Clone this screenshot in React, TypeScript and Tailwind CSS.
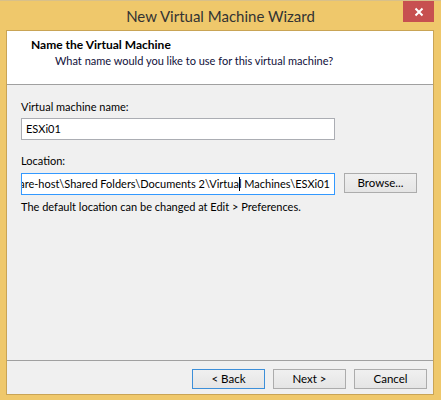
const font = { fontFamily: 'Lato, "Liberation Sans", sans-serif' };

function WinButton({ label, focused }: { label: string; focused?: boolean }) {
  return (
    <button
      className={
        "flex h-[20px] w-[73px] items-center justify-center border bg-gradient-to-b from-[#f0f0f0] to-[#e5e5e5] text-[11.5px] leading-none text-black " +
        (focused ? "border-[#3c8fd9]" : "border-[#acacac]")
      }
    >
      {label}
    </button>
  );
}

export default function App() {
  return (
    <div
      className="flex h-[400px] w-[441px] flex-col border-t border-[#d8c08a] bg-[#efc86b]"
      style={font}
    >
      {/* title bar */}
      <div className="grid h-[29px] grid-cols-[1fr_auto_1fr]">
        <div />
        <div className="pt-[5px] text-[15px] leading-[20px] text-[#333333]">
          New Virtual Machine Wizard
        </div>
        <div className="flex justify-end pr-[7px]">
          <div className="flex h-[21px] w-[31px] items-center justify-center bg-[#c75050]">
            <svg width="10" height="10" viewBox="0 0 10 10" aria-hidden="true">
              <path d="M1.5 1.5L8.5 8.5M8.5 1.5L1.5 8.5" stroke="#fff" strokeWidth="2" />
            </svg>
          </div>
        </div>
      </div>

      {/* dialog body */}
      <div className="mb-[5px] ml-[6px] mr-[7px] flex flex-1 flex-col border border-[#c9a455] bg-[#f0f0f0] text-[11px] leading-[16px]">
        <div className="h-[54px] border-b border-[#a0a0a0] bg-white pl-[24px] pt-[6px] text-[#10103a]">
          <div className="text-[12px] font-bold text-black">Name the Virtual Machine</div>
          <div className="pl-[24px]">What name would you like to use for this virtual machine?</div>
        </div>

        <div className="flex flex-1 flex-col px-[14px] pt-[14px] text-black">
          <div>Virtual machine name:</div>
          <div className="mt-[3px] flex h-[22px] w-[314px] items-center border border-[#abadb3] bg-white px-[4px]">
            ESXi01
          </div>

          <div className="mt-[13px]">Location:</div>
          <div className="mt-[4px] flex items-start gap-[9px]">
            <div className="flex h-[22px] w-[314px] items-center justify-end overflow-hidden whitespace-nowrap border border-[#3399ff] bg-white pr-[4px]">
              <span>
                \\vmware-host\Shared Folders\Documents 2\Virtua
                <span className="relative inline-block w-0">
                  <span className="absolute left-0 top-[-11px] h-[14px] w-px bg-black" />
                </span>
                l Machines\ESXi01
              </span>
            </div>
            <WinButton label="Browse..." />
          </div>
          <div className="mt-[4px]">The default location can be changed at Edit &gt; Preferences.</div>
        </div>

        <div className="flex h-[34px] justify-end gap-[8px] border-t border-[#a0a0a0] pr-[6px] pt-[8px]">
          <WinButton label="< Back" focused />
          <WinButton label="Next >" />
          <WinButton label="Cancel" />
        </div>
      </div>
    </div>
  );
}
